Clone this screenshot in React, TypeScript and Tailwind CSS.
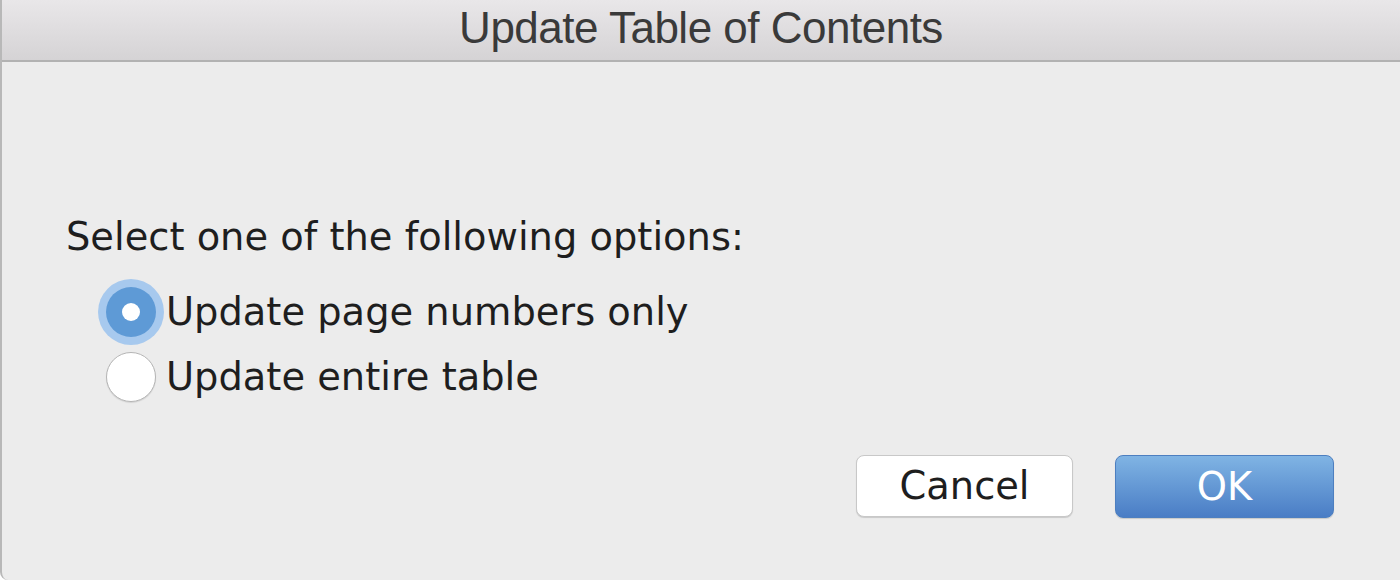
export default function App() {
  return (
    <div className="w-[1400px] h-[580px] bg-[#ececec] flex flex-col border-l-2 border-[#b8b8b8] rounded-bl-[8px] overflow-hidden" style={{ fontFamily: '"DejaVu Sans", Verdana, sans-serif' }}>
      <div className="h-[62px] shrink-0 bg-gradient-to-b from-[#e9e7e9] to-[#d5d3d5] border-b-2 border-[#b2b2b2] flex items-center justify-center">
        <span className="text-[44px] leading-none text-[#3a3a3a] tracking-[-0.5px] -mt-[4px] font-['Liberation_Sans',Arial,sans-serif]">Update Table of Contents</span>
      </div>
      <div className="flex-1 flex flex-col pl-[64px] pr-[64px]">
        <div className="mt-[155px] h-[40px] flex items-center text-[38.4px] leading-none text-[#1e1e1e]">Select one of the following options:</div>
        <div className="mt-[30px] flex flex-col gap-[15px] pl-[40px]">
          <div className="flex items-center gap-[10px] h-[50px]">
            <div className="w-[50px] h-[50px] rounded-full bg-[#5e9ad6] flex items-center justify-center ring-[8px] ring-[#a7c9ee]">
              <div className="w-[18px] h-[18px] rounded-full bg-white" />
            </div>
            <span className="text-[38.4px] leading-none text-[#1e1e1e]">Update page numbers only</span>
          </div>
          <div className="flex items-center gap-[10px] h-[50px]">
            <div className="w-[50px] h-[50px] rounded-full bg-white border border-[#b5b5b5] shadow-[0_1px_1px_rgba(0,0,0,0.1)]" />
            <span className="text-[38.4px] leading-none text-[#1e1e1e]">Update entire table</span>
          </div>
        </div>
        <div className="mt-[53px] flex justify-end gap-[42px] pr-[2px]">
          <button className="w-[217px] h-[62px] rounded-[8px] bg-white border border-[#c8c8c8] shadow-[0_1px_1px_rgba(0,0,0,0.15)] text-[38.4px] text-[#1e1e1e]">Cancel</button>
          <button className="w-[219px] h-[63px] rounded-[8px] bg-gradient-to-b from-[#80b4e4] to-[#4a7dc5] border border-[#4d7fc0] shadow-[0_1px_1px_rgba(0,0,0,0.15)] text-[38.4px] text-white">OK</button>
        </div>
      </div>
    </div>
  );
}
